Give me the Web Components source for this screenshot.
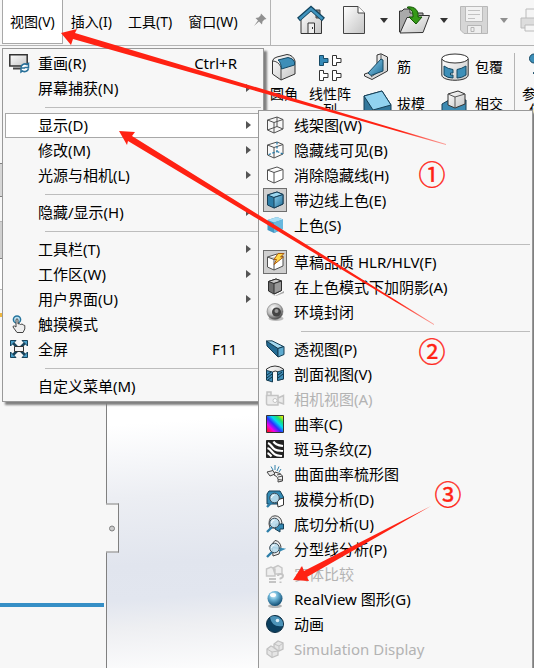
<!DOCTYPE html>
<html lang="zh-CN">
<head>
<meta charset="UTF-8">
<meta name="viewport" content="width=device-width, initial-scale=1">
<title>视图</title>
<style>
    :root {
        --line: #b4b4b4;
        --panel-bg: #f7f7f7;
        --text: #000;
        --muted: #b3b3b3;
        --accent: #ff2213;
    }
    body {
        margin: 0;
        height: 100vh;
        overflow: hidden;
        background: var(--panel-bg);
        color: var(--text);
        font-family: "Noto Sans", "Noto Sans CJK SC", sans-serif;
        font-size: 14px;
    }
</style>
</head>
<body>
<app-window>
    <app-bar slot="bar">
        <bar-menu slot="menus" active>视图(V)</bar-menu>
        <bar-menu slot="menus">插入(I)</bar-menu>
        <bar-menu slot="menus">工具(T)</bar-menu>
        <bar-menu slot="menus">窗口(W)</bar-menu>
        <tool-button icon="home" label="主页"></tool-button>
        <tool-button icon="doc" label="新建" menu></tool-button>
        <tool-button icon="open" label="打开" menu></tool-button>
        <tool-button icon="save" label="保存" menu disabled></tool-button>
        <tool-button icon="print" label="打印" disabled></tool-button>
    </app-bar>

    <ribbon-bar slot="ribbon">
        <ribbon-button icon="fillet">圆角</ribbon-button>
        <ribbon-button icon="pattern">线性阵<br>列</ribbon-button>
        <ribbon-group>
            <ribbon-button icon="rib" inline>筋</ribbon-button>
            <ribbon-button icon="draft" inline>拔模</ribbon-button>
        </ribbon-group>
        <ribbon-group last>
            <ribbon-button icon="wrap" inline>包覆</ribbon-button>
            <ribbon-button icon="intersect" inline>相交</ribbon-button>
        </ribbon-group>
        <ribbon-button icon="ref" divided>参考几<br>何体</ribbon-button>
    </ribbon-bar>

    <side-panel slot="side"></side-panel>
    <model-view slot="view"></model-view>

    <popup-menu slot="menu" class="view-menu">
        <menu-item icon="redraw" shortcut="Ctrl+R">重画(R)</menu-item>
        <menu-item submenu>屏幕捕获(N)</menu-item>
        <menu-separator></menu-separator>
        <menu-item submenu selected>显示(D)</menu-item>
        <menu-item submenu>修改(M)</menu-item>
        <menu-item submenu>光源与相机(L)</menu-item>
        <menu-separator></menu-separator>
        <menu-item submenu>隐藏/显示(H)</menu-item>
        <menu-separator></menu-separator>
        <menu-item submenu>工具栏(T)</menu-item>
        <menu-item submenu>工作区(W)</menu-item>
        <menu-item submenu>用户界面(U)</menu-item>
        <menu-item icon="touch">触摸模式</menu-item>
        <menu-item icon="full" shortcut="F11">全屏</menu-item>
        <menu-separator></menu-separator>
        <menu-item>自定义菜单(M)</menu-item>
    </popup-menu>

    <popup-menu slot="submenu" class="display-menu">
        <menu-item icon="wire">线架图(W)</menu-item>
        <menu-item icon="hiddenVisible">隐藏线可见(B)</menu-item>
        <menu-item icon="hiddenRemoved">消除隐藏线(H)</menu-item>
        <menu-item icon="shadedEdges" checked>带边线上色(E)</menu-item>
        <menu-item icon="shaded">上色(S)</menu-item>
        <menu-separator></menu-separator>
        <menu-item icon="draftQuality" checked>草稿品质 HLR/HLV(F)</menu-item>
        <menu-item icon="shadow">在上色模式下加阴影(A)</menu-item>
        <menu-item icon="occlusion">环境封闭</menu-item>
        <menu-separator></menu-separator>
        <menu-item icon="perspective">透视图(P)</menu-item>
        <menu-item icon="section">剖面视图(V)</menu-item>
        <menu-item icon="camera" disabled>相机视图(A)</menu-item>
        <menu-item icon="curvature">曲率(C)</menu-item>
        <menu-item icon="zebra">斑马条纹(Z)</menu-item>
        <menu-item icon="comb">曲面曲率梳形图</menu-item>
        <menu-item icon="draftAnalysis">拔模分析(D)</menu-item>
        <menu-item icon="undercut">底切分析(U)</menu-item>
        <menu-item icon="parting">分型线分析(P)</menu-item>
        <menu-item icon="compare" disabled>实体比较</menu-item>
        <menu-item icon="realview">RealView 图形(G)</menu-item>
        <menu-item icon="cartoon">动画</menu-item>
        <menu-item icon="simulation" disabled>Simulation Display</menu-item>
    </popup-menu>

    <callout-layer slot="notes"></callout-layer>
</app-window>

<script>
const GRADIENTS = `
    <linearGradient id="blue" x1="0" y1="0" x2="1" y2="1"><stop offset="0" stop-color="#8fd0ee"/><stop offset="1" stop-color="#1f6d97"/></linearGradient>
    <linearGradient id="grey" x1="0" y1="0" x2="1" y2="1"><stop offset="0" stop-color="#fff"/><stop offset="1" stop-color="#c4c4c4"/></linearGradient>
    <radialGradient id="ball" cx=".4" cy=".3" r=".7"><stop offset="0" stop-color="#e8f8ff"/><stop offset=".4" stop-color="#6fb6d8"/><stop offset="1" stop-color="#0f4c72"/></radialGradient>
    <radialGradient id="steel" cx=".4" cy=".3" r=".7"><stop offset="0" stop-color="#fff"/><stop offset=".6" stop-color="#bbb"/><stop offset="1" stop-color="#444"/></radialGradient>
    <linearGradient id="rainbow" x1="1" y1="0" x2="0" y2="1"><stop offset=".05" stop-color="#f6f000"/><stop offset=".22" stop-color="#23e06a"/><stop offset=".38" stop-color="#00d8f0"/><stop offset=".55" stop-color="#2a30ff"/><stop offset=".74" stop-color="#f000e8"/><stop offset=".92" stop-color="#ff1030"/></linearGradient>
`;

const CUBE = 'M1.5 4 L11 1 L17 3.500 V13 L8 17 L1.500 14 Z';
const LENS = `<path d="M6.500 11.500 L1 17" stroke="#2b7da8" stroke-width="2.400"/><circle cx="8.500" cy="8" r="4.800" fill="#b9dcec" fill-opacity=".9" stroke="#3b4a55"/><path d="M5.500 8 a3 3 0 0 1 3-3" stroke="#fff"/>`;

const ICONS = {
    home: [28, 28, `<path d="M4 13 V27.500 H24.500 V13 L14 4 Z" fill="url(#grey)" stroke="#333"/><path d="M19 4 h4 v8 h-4z" fill="#888" stroke="#444"/><path d="M1.500 13.500 L14 2.500 L26.500 13.500" stroke="#12445f" stroke-width="4.500"/><path d="M2.500 13 L14 2.800 L25.500 13" stroke="#3f93bd" stroke-width="2.500"/><path d="M11 27 V17 H17.500 V27" fill="#eee" stroke="#333"/><path d="M15.500 21v2" stroke="#333"/>`],
    doc: [22, 28, `<path d="M.500 .500 H15 L21.500 7 V27.500 H.500Z" fill="url(#grey)" stroke="#444"/><path d="M15 .500 V7 H21.500" fill="#fff" stroke="#444"/>`],
    open: [34, 28, `<path d="M2.500 26 V5 H5 L7 3 H13 V7 H26 V12" fill="#aaa" stroke="#333"/><path d="M3 27 L10 11.500 H20 L22 9.500 H32.500 L26 26.500 Z" fill="url(#grey)" stroke="#333"/><path d="M10.500 1 C18 0 22 5 21 11 H25 L19 18 L12 11 H16 C16 6 15 3 10.500 2Z" fill="#359a17" stroke="#145405"/>`],
    save: [28, 28, `<path d="M.500 .500 H27.500 V27.500 H4 L.500 24Z" fill="#d6d6d6" stroke="#b8b8b8"/><path d="M5.500 .500 H22.500 V15.500 H5.500Z" fill="#f2f2f2" stroke="#bbb"/><path d="M8 4.500h12M8 8.500h12M8 12.500h7" stroke="#c2c2c2"/><path d="M7.500 27 V19.500 H21.500 V27" fill="#eee" stroke="#b5b5b5"/><path d="M11 21.500h3v4h-3z" stroke="#b5b5b5"/>`],
    print: [28, 28, `<path d="M6 12V3H22V12" fill="#f5f5f5" stroke="#bbb"/><path d="M1 12H27V22H1Z" fill="#ddd" stroke="#bbb"/><path d="M5 19H23V25H5Z" fill="#f5f5f5" stroke="#bbb"/>`],
    fillet: [28, 28, `<path d="M2.500 8 Q3 5 7 4 L17 1.500 Q23 2 25 8 V21 L11 27 L2.500 21Z" fill="url(#grey)" stroke="#333"/><path d="M2.500 8 Q8 8 11 14 V27" stroke="#444"/><path d="M8 7 L18 4.500 Q23 5 24.500 9 V12 L11.500 16 Q11 9 8 7Z" fill="#3d8eb8" stroke="#144863"/>`],
    pattern: [28, 28, `<path d="M3.500 2.500h4v3h4.500v4H7.500v3h-4z" fill="#358ab7" stroke="#164a66"/><path d="M16.500 2.500h4v3h4.500v4h-4.500v3h-4zM3.500 17.500h4v3h4.500v4H7.500v3h-4zM16.500 17.500h4v3h4.500v4h-4.500v3h-4z" fill="#fff" stroke="#333"/>`],
    rib: [28, 28, `<path d="M1.500 21 L14 17 V2 L18 .800 L24.500 4 V18 L9 26.500 L1.500 23Z" fill="url(#grey)" stroke="#333"/><path d="M18 1V17L8 24" stroke="#555"/><path d="M5 20 L18 6 L20 7 V18 L8 22.500Z" fill="url(#blue)" stroke="#174963"/>`],
    draft: [28, 28, `<path d="M1 6 L19 1 L28 15 V25 L9 30 L1 25Z" fill="#32779b" stroke="#163f56"/><path d="M1 6 L19 1 L28 15 L10 20Z" fill="#91d2ef" stroke="#163f56"/><path d="M10 20V28" stroke="#163f56"/>`],
    wrap: [28, 28, `<path d="M.800 6 V22 C1 29 27 29 27.200 22 V6" fill="url(#grey)" stroke="#333"/><path d="M3 13 Q7 16 12 16.500 V20 H9.500 V22 H12 V25 Q6 25 3 22ZM25 13 Q20 16 16 16.500 V25 Q21 25 25 22Z" fill="#3d8fb8" stroke="#174963"/><ellipse cx="14" cy="5.500" rx="13.200" ry="4.500" fill="#fff" stroke="#333"/>`],
    intersect: [28, 28, `<path d="M1 14 L8 10 H25 V26 L16 30 H1Z" fill="#3c8ab2" stroke="#183f55"/><path d="M7 4 L17 1 L24 4 V14 L14 18 L7 15Z" fill="url(#grey)" stroke="#333"/><path d="M7 4 L14 7 L24 4M14 7V18" stroke="#555"/>`],
    ref: [28, 28, `<circle cx="5" cy="5.500" r="4.500" fill="#3d8fb8" stroke="#174963"/><path d="M4 20 L18 12 L26 18 L12 26Z" fill="url(#blue)" stroke="#174963"/>`],

    redraw: [20, 18, `<path d="M.800 .800H18.200V12H.800Z" fill="url(#grey)" stroke="#333" stroke-width="1.500"/><path d="M4 14.500h9" stroke="#444" stroke-width="2"/><path d="M12 13 a4 4 0 0 1 6-2.500l1.500-1v4h-4M19.500 14.500a4 4 0 0 1-6 2.500l-1.500 1v-4h4" fill="#fff" stroke="#287099" stroke-width="1.500"/>`],
    touch: [18, 18, `<circle cx="7" cy="4.500" r="3.600" fill="#bfe4f4" stroke="#24749d" stroke-width="1.500"/><path d="M6 4.500 q1-1.500 2 0 V9 l1-.500 1.500 1 1.500-.500 1.500 1 1.300.500 V14 L13 17.500H7L3 12 q0-1.500 1.500-1L6 12Z" fill="#eee" stroke="#444"/>`],
    full: [18, 18, `<path d="M3 3 L15 15 M15 3 L3 15" stroke="#17435b" stroke-width="2.500"/><path d="M.500 .500h5.500L.500 6zM17.500 .500V6L12 .500zM.500 17.500V12L6 17.500zM17.500 17.500H12L17.500 12z" fill="#4a9fc9" stroke="#17435b"/><path d="M4.500 6.500h9v5h-9z" fill="#f3f3f3" stroke="#333"/>`],
    wire: [18, 18, `<path d="${CUBE}M1.500 4L8 6.500L17 3.500M8 6.500V17M11 1V10.500L1.500 14M11 10.500L17 13" stroke="#505050"/>`],
    hiddenVisible: [18, 18, `<path d="${CUBE}M1.500 4L8 6.500L17 3.500M8 6.500V17" fill="#fafafa" stroke="#505050"/><path d="M11 1V10.500L1.500 14M11 10.500L17 13" stroke="#2a7ca8" stroke-width="1.300" stroke-dasharray="2.500 1.500"/>`],
    hiddenRemoved: [18, 18, `<path d="${CUBE}M1.500 4L8 6.500L17 3.500M8 6.500V17" fill="#fff" stroke="#505050"/>`],
    shadedEdges: [18, 18, `<path d="${CUBE}" fill="#2d7ea8" stroke="#163d55"/><path d="M1.500 4L11 1L17 3.500L8 6.500Z" fill="#9bd6ef" stroke="#163d55"/><path d="M8 6.500L17 3.500V13L8 17Z" fill="url(#blue)" stroke="#163d55"/>`],
    shaded: [18, 18, `<path d="${CUBE}" fill="#4298c4"/><path d="M1.500 4L11 1L17 3.500L8 6.500Z" fill="#a9def5"/><path d="M8 6.500L17 3.500V13L8 17Z" fill="#68b8de"/>`],
    draftQuality: [18, 18, `<path d="${CUBE}M1.500 4L8 6.500L17 3.500M8 6.500V17" fill="#fff" stroke="#505050"/><path d="M12 .500H18L14.500 4H17.500L8 11.500L10.500 6.500H8Z" fill="#ffd84a" stroke="#a85b12"/>`],
    shadow: [18, 18, `<path d="M2 14L9 18L18 13V15L10 18Z" fill="#aaa"/><path d="M2.500 3.500L10 1L15.500 3V12.500L8 16L2.500 13Z" fill="#6e6e6e" stroke="#2f2f2f"/><path d="M2.500 3.500L10 1L15.500 3L8 5.500Z" fill="#c8c8c8" stroke="#2f2f2f"/><path d="M8 5.500L15.500 3V12.500L8 16Z" fill="#999" stroke="#2f2f2f"/>`],
    occlusion: [18, 18, `<ellipse cx="10" cy="15.500" rx="7.500" ry="2.500" fill="#bbb"/><circle cx="9" cy="8.500" r="8" fill="url(#steel)" stroke="#777" stroke-width=".600"/><circle cx="10.500" cy="9" r="4.500" fill="#444"/><circle cx="10.500" cy="8" r="2" fill="#999"/>`],
    perspective: [18, 18, `<path d="M.500 1L12 8.500V17L1 6Z" fill="#236c95" stroke="#143d54"/><path d="M.500 1L6 .800L17.500 6.500L12 8.500Z" fill="#a2d9f1" stroke="#143d54"/><path d="M12 8.500L18 6.500V14.500L12 17Z" fill="#5eabd0" stroke="#143d54"/>`],
    section: [18, 18, `<path d="M.500 4Q9-2 17.500 4V14L12.500 15V7Q9 5 6.500 7V16L.500 15Z" fill="url(#grey)" stroke="#333"/><path d="M.500 5.500L6.500 7V17L.500 15ZM11.500 7L17.500 5V14L11.500 15.500Z" fill="#3f8eb8" stroke="#143d54"/><path d="M1 10l4-3M1 13l5-4M2 15l4-3M12 10l4-3M12 13l5-4" stroke="#0f3348"/>`],
    camera: [18, 18, `<path d="M1 5V2H5V5M.500 5.500H12V15H2Q.500 15 .500 13ZM12 8L17.500 5.500V14L12 12" fill="#ececec" stroke="#c4c4c4" stroke-width="1.500"/><circle cx="9" cy="10.500" r="2" fill="#fff" stroke="#c4c4c4"/>`],
    curvature: [18, 18, `<path d="M.500 .500H17.500V17.500H.500Z" fill="url(#rainbow)" stroke="#333"/>`],
    zebra: [18, 18, `<path d="M.500 .500H17.500V17.500H.500Z" fill="#222" stroke="#222"/><path d="M7.500 1.500C9 5 13 5.500 17 6M2 3C5 4 6 8 9 9.500S14 10.500 17 11M1.500 8C5 9 6 13 9 14.500S13 15.500 16 16M1.500 13C3 13.500 4 15 5.500 16.500" stroke="#fff" stroke-width="2.200"/>`],
    comb: [18, 18, `<path d="M1 7L7 5.500L9 9L4 11Z" fill="#e8e8e8" stroke="#444"/><path d="M9 7Q15 8 16.500 11V16L12 17Q13 12 8 10Z" fill="#eee" stroke="#444"/><path d="M5 1.500L7 5M9 0V5M13 1.500L11 6M15 4L13 7" stroke="#3181ab"/><path d="M11 10l4-1M12 12l5-1M12 14.500l4 .500" stroke="#555"/>`],
    draftAnalysis: [18, 18, `<path d="M1 4L3 1H14L17.500 7V14H1Z" fill="#338bb5" stroke="#153f56"/><path d="M11 10L17.500 8V15L12 17Z" fill="#fff" stroke="#333"/>${LENS}`],
    undercut: [18, 18, `<path d="M3 9Q3 1 9 .800Q15 1 16 8L12 13H4Z" fill="#eee" stroke="#444"/><path d="M10 9H17.500V14H14V17L9 14Z" fill="#3488b2" stroke="#153f56"/>${LENS}`],
    parting: [18, 18, `<path d="M6 4L9 .500Q14 1 15 7L13 14L7 16Z" fill="#eee" stroke="#444"/><path d="M4 7L17.500 9L13 11" stroke="#3488b2" stroke-width="1.500"/>${LENS}`],
    compare: [18, 18, `<path d="M.500 4L5 2L9 4V11H.500ZM7 3L12 .500L16 3V9H9Z" fill="#eee" stroke="#c6c6c6" stroke-width="1.400"/><path d="M3 14h7M3 17h7M12 11q0-2 2.500-2t2.500 2q0 1.500-2.500 2.500v1M14.500 16.500v1.500" stroke="#c4c4c4" stroke-width="2"/>`],
    realview: [18, 18, `<ellipse cx="9" cy="16" rx="7" ry="2" fill="#b4b4b4"/><circle cx="9" cy="8.500" r="7.500" fill="url(#ball)"/><ellipse cx="7" cy="5" rx="3" ry="2" fill="#fff"/>`],
    cartoon: [18, 18, `<circle cx="9" cy="9" r="8.500" fill="#0b3f5f" stroke="#0a2c42"/><path d="M4 2.500A8.500 8.500 0 0 1 17 11Q6 13 4 2.500Z" fill="#4c93b8"/><circle cx="11.500" cy="5.500" r="1.800" fill="#d8eef8"/>`],
    simulation: [18, 18, `<path d="M1 9L5 6L9 8L12 11V15L6 17.500L1 14ZM8 4L12 1L17 3V9L13 11L8 8Z" fill="#e5e5e5" stroke="#c2c2c2" stroke-width="1.300"/><path d="M1 9L6 12V17M6 12L12 11M8 4L13 6L17 3M13 6V11" stroke="#c2c2c2"/>`],
    pin: [14, 14, `<path d="M8 .500L13.500 6L11.500 6.500L9.500 8.500L9 11.500L6 8.500L1 13L5 7.500L2.500 5L5.500 4.500L7.500 2.500Z" fill="#909090"/>`]
};

function define(name, html, setup) {
    const template = document.createElement('template');
    template.innerHTML = html;
    customElements.define(name, class extends HTMLElement {
        constructor() {
            super();
            this.attachShadow({ mode: 'open' }).appendChild(template.content.cloneNode(true));
        }
        connectedCallback() {
            if (setup) setup(this, this.shadowRoot);
        }
    });
}

define('app-icon', `
    <style>
        :host { display: inline-flex; flex: none; }
        svg { display: block; fill: none; overflow: visible; }
    </style>
    <svg aria-hidden="true"></svg>
`, (host, root) => {
    const [w, h, shapes] = ICONS[host.getAttribute('name')];
    const svg = root.querySelector('svg');
    svg.setAttribute('width', w);
    svg.setAttribute('height', h);
    svg.setAttribute('viewBox', `0 0 ${w} ${h}`);
    svg.innerHTML = `<defs>${GRADIENTS}</defs>${shapes}`;
});

function addIcon(host, root) {
    const name = host.getAttribute('icon');
    if (!name) return;
    const icon = document.createElement('app-icon');
    icon.setAttribute('name', name);
    root.querySelector('.icon').replaceChildren(icon);
}

define('app-window', `
    <style>
        :host {
            display: flex;
            flex-direction: column;
            position: relative;
            height: 100%;
            overflow: hidden;
        }
        .work { display: flex; flex: 1; min-height: 0; }
        ::slotted(model-view) { flex: 1; }
        ::slotted(.view-menu), ::slotted(.display-menu) { position: absolute; }
        ::slotted(.view-menu) { left: 2px; top: 48px; width: 262px; }
        ::slotted(.display-menu) { left: 258px; top: 110px; right: 1px; bottom: -20px; }
    </style>
    <slot name="bar"></slot>
    <slot name="ribbon"></slot>
    <div class="work"><slot name="side"></slot><slot name="view"></slot></div>
    <slot name="menu"></slot>
    <slot name="submenu"></slot>
    <slot name="notes"></slot>
`);

define('app-bar', `
    <style>
        :host { display: flex; flex: none; height: 45px; border-bottom: 1px solid var(--line); }
        nav {
            display: flex;
            flex: 0 0 270px;
            box-sizing: border-box;
            padding-left: 2px;
        }
        app-icon { margin: 13px 0 0 7px; }
        .tools {
            display: flex;
            align-items: center;
            flex: 1;
            min-width: 0;
            overflow: hidden;
            gap: 9px;
            padding: 0 0 5px 23px;
            border-left: 1px solid var(--line);
        }
    </style>
    <nav><slot name="menus"></slot><app-icon name="pin"></app-icon></nav>
    <div class="tools"><slot></slot></div>
`);

define('bar-menu', `
    <style>
        :host { display: block; height: 44px; }
        button {
            height: 100%;
            padding: 0 7px 2px;
            border: 1px solid transparent;
            border-top: 0;
            background: none;
            color: inherit;
            font: inherit;
            font-size: 14px;
            white-space: nowrap;
        }
        :host([active]) button { background: #fff; border-color: #a8a8a8; }
    </style>
    <button type="button"><slot></slot></button>
`);

define('tool-button', `
    <style>
        :host { display: flex; flex: none; }
        button {
            display: flex;
            align-items: center;
            gap: 9px;
            padding: 0;
            border: 0;
            background: none;
        }
        .icon { display: flex; justify-content: center; width: 34px; }
        .caret { display: none; border: 4px solid transparent; border-top: 5px solid #333; border-bottom: 0; }
        :host([menu]) .caret { display: block; }
        :host([disabled]) .caret { border-top-color: #909090; }
    </style>
    <button type="button"><span class="icon"></span><span class="caret"></span></button>
`, (host, root) => {
    addIcon(host, root);
    const button = root.querySelector('button');
    button.setAttribute('aria-label', host.getAttribute('label'));
    button.disabled = host.hasAttribute('disabled');
});

define('ribbon-bar', `
    <style>
        :host {
            display: flex;
            flex: none;
            box-sizing: border-box;
            height: 84px;
            padding: 7px 0 0 270px;
            overflow: hidden;
        }
    </style>
    <slot></slot>
`);

define('ribbon-group', `
    <style>
        :host { display: flex; flex-direction: column; flex: none; gap: 9px; margin-right: 15px; }
        :host([last]) { margin-right: 11px; }
    </style>
    <slot></slot>
`);

define('ribbon-button', `
    <style>
        :host { display: block; flex: none; margin-right: 11px; }
        :host([inline]) { margin-right: 0; }
        :host([divided]) { border-left: 1px solid var(--line); padding-left: 7px; }
        button {
            display: flex;
            flex-direction: column;
            align-items: center;
            gap: 5px;
            padding: 0;
            border: 0;
            background: none;
            color: inherit;
            font: inherit;
            font-size: 14px;
            line-height: 16px;
            white-space: nowrap;
        }
        :host([inline]) button { flex-direction: row; gap: 6px; padding-left: 1px; }
        .icon { display: flex; }
    </style>
    <button type="button"><span class="icon"></span><span><slot></slot></span></button>
`, addIcon);

define('side-panel', `
    <style>
        :host {
            display: flex;
            flex-direction: column;
            flex: 0 0 106px;
            border-right: 1px solid #808080;
        }
        .tabs { height: 33px; }
        .tab { height: 32px; background: #d6d6d6; border: solid #808080; border-width: 1px 0; }
        .head { height: 24px; border-bottom: 1px solid var(--line); }
        .tree { height: 36px; background: #d0d0d0; border-bottom: 1px solid #808080; }
        .list { height: 30px; background: #fff; border-bottom: 1px solid var(--line); }
        .mark { height: 4px; margin-top: 23px; background: #efb73e; }
        .rollback { height: 4px; margin: auto 2px 61px 0; background: #368fc6; }
    </style>
    <div class="tabs"></div>
    <div class="tab"></div>
    <div class="head"></div>
    <div class="tree"></div>
    <div class="list"></div>
    <div class="mark"></div>
    <div class="rollback"></div>
`);

define('model-view', `
    <style>
        :host {
            display: block;
            position: relative;
            background: linear-gradient(176deg, #fff 52%, #eceef3 65%, #e1e5ee 77%, #e2e6ef 83%, #eeeff2 88%, #fff 98%);
        }
        /* splitter grip that hangs over the view's left edge */
        button {
            position: absolute;
            left: -1px;
            top: 74%;
            display: flex;
            align-items: center;
            justify-content: center;
            width: 13px;
            height: 49px;
            padding: 0;
            border: 1px solid #808080;
            border-left: 0;
            background: var(--panel-bg);
            transform: translateY(-50%);
        }
        span { width: 4px; height: 4px; border: 1px solid #808080; border-radius: 50%; background: #ccc; }
    </style>
    <button type="button" aria-label="折叠面板"><span></span></button>
`);

define('popup-menu', `
    <style>
        :host {
            display: block;
            box-sizing: border-box;
            padding: 2px;
            border: 1px solid #999;
            background: var(--panel-bg);
            box-shadow: 3px 3px 2px #808080;
            font-size: 15px;
        }
    </style>
    <div role="menu"><slot></slot></div>
`);

define('menu-item', `
    <style>
        :host { display: block; height: 25px; }
        button {
            display: flex;
            align-items: center;
            box-sizing: border-box;
            width: 100%;
            height: 25px;
            padding: 0 9px 2px 0;
            border: 1px solid transparent;
            background: none;
            color: inherit;
            font: inherit;
            line-height: 20px;
            text-align: left;
            white-space: nowrap;
        }
        .icon {
            display: flex;
            align-items: center;
            justify-content: center;
            box-sizing: border-box;
            flex: none;
            width: 24px;
            height: 24px;
            margin: 0 7px 0 1px;
        }
        .label { flex: 1; }
        .shortcut { padding-right: 14px; }
        .arrow { display: none; border: 4px solid transparent; border-left: 5px solid #555; border-right: 0; }
        :host([submenu]) .arrow { display: block; }
        :host([selected]) button { background: #fff; border-color: #a8a8a8; }
        :host([checked]) .icon { border: 1px solid #6e6e6e; background: #cfcfcf; }
        :host([disabled]) button { color: var(--muted); }
    </style>
    <button type="button" role="menuitem">
        <span class="icon"></span>
        <span class="label"><slot></slot></span>
        <span class="shortcut"></span>
        <span class="arrow"></span>
    </button>
`, (host, root) => {
    addIcon(host, root);
    const shortcut = root.querySelector('.shortcut');
    if (host.hasAttribute('shortcut')) {
        shortcut.textContent = host.getAttribute('shortcut');
    } else {
        shortcut.remove();
    }
    root.querySelector('button').disabled = host.hasAttribute('disabled');
});

define('menu-separator', `
    <style>
        :host { display: block; height: 12px; padding: 6px 0 0 40px; box-sizing: border-box; }
        div { height: 1px; background: #bdbdbd; }
    </style>
    <div role="separator"></div>
`);

// Hand-drawn arrows and step numbers, laid over everything else
define('callout-layer', `
    <style>
        :host { position: absolute; inset: 0; pointer-events: none; }
        svg { display: block; width: 100%; height: 100%; }
        text {
            fill: var(--accent);
            stroke: var(--accent);
            stroke-width: .4px;
            font: 27px "Noto Sans CJK SC", sans-serif;
            text-anchor: middle;
        }
    </style>
    <svg>
        <defs>
            <linearGradient id="fade"><stop offset=".88" stop-color="#ff2213"/><stop offset="1" stop-color="#ff2213" stop-opacity=".4"/></linearGradient>
        </defs>
        <path fill="url(#fade)" d="M61 33L77 29L75 33L446 144L446 145L73 39L71 45Z"/>
        <path fill="url(#fade)" d="M119 131L135 132L132 136L434 324L434 325L128 141L127 145Z"/>
        <path fill="#ff2213" d="M293 580L302 566L304 571L431 506L307 577L309 581Z"/>
        <text x="432" y="185">①</text>
        <text x="432" y="362">②</text>
        <text x="448" y="505">③</text>
    </svg>
`);
</script>
</body>
</html>
